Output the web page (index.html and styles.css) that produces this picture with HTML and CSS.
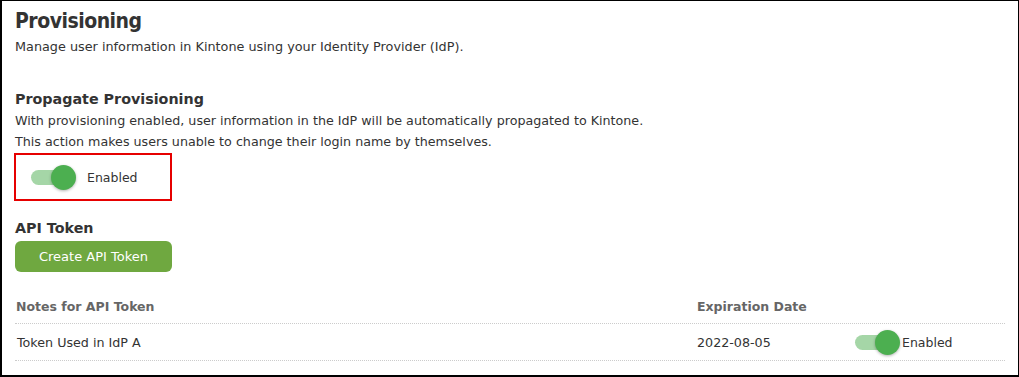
FILE: index.html
```html
<!DOCTYPE html>
<html>
<head>
<meta charset="utf-8">
<link rel="stylesheet" href="styles.css">
</head>
<body>
<div class="frame">
  <h1 class="title">Provisioning</h1>
  <p class="desc">Manage user information in Kintone using your Identity Provider (IdP).</p>

  <h2 class="section-title propagate">Propagate Provisioning</h2>
  <p class="text">With provisioning enabled, user information in the IdP will be automatically propagated to Kintone.<br>This action makes users unable to change their login name by themselves.</p>
  <div class="highlight">
    <span class="switch"><span class="track"></span><span class="knob"></span></span>
    <span class="switch-label">Enabled</span>
  </div>

  <h2 class="section-title api">API Token</h2>
  <button class="btn">Create API Token</button>

  <div class="table">
    <div class="row head">
      <div class="c-notes">Notes for API Token</div>
      <div class="c-date">Expiration Date</div>
      <div class="c-status"></div>
    </div>
    <div class="row body">
      <div class="c-notes cell-notes">Token Used in IdP A</div>
      <div class="c-date">2022-08-05</div>
      <div class="c-status">
        <span class="switch small"><span class="track"></span><span class="knob"></span></span>
        <span class="switch-label tight">Enabled</span>
      </div>
    </div>
  </div>
</div>
</body>
</html>
```
FILE: styles.css
```css
* { box-sizing: border-box; }
html, body { margin: 0; padding: 0; background: #fff; }
body {
  font-family: "DejaVu Sans", "Liberation Sans", sans-serif;
  color: #333;
}
.frame {
  width: 1019px;
  height: 377px;
  border-top: 1px solid #000;
  border-left: 2px solid #000;
  border-right: 1px solid #000;
  border-bottom: 2px solid #000;
  padding: 0 13px 0 13px;
  overflow: hidden;
}
.title {
  margin: 5px 0 0 0;
  font-family: "DejaVu Sans Condensed", "DejaVu Sans", sans-serif;
  font-size: 21px;
  letter-spacing: -0.5px;
  line-height: 30px;
  font-weight: 700;
  color: #333;
}
.desc {
  margin: 1px 0 0 0;
  font-size: 12.8px;
  line-height: 20px;
}
.section-title {
  margin: 0;
  font-size: 14.3px;
  line-height: 22px;
  font-weight: 700;
  color: #333;
}
.propagate { margin-top: 31px; }
.text {
  margin: 0;
  font-size: 12.7px;
  line-height: 21px;
}
.highlight {
  margin-top: 1px;
  width: 158px;
  height: 48px;
  border: 2px solid #e60000;
  margin-left: -1px;
  display: flex;
  align-items: center;
  padding-left: 15px;
}
.switch {
  position: relative;
  display: inline-block;
  width: 45px;
  height: 25px;
  flex: none;
}
.switch .track {
  position: absolute;
  left: 0;
  top: 5px;
  width: 36px;
  height: 15px;
  border-radius: 8px;
  background: #a5d6a7;
}
.switch .knob {
  position: absolute;
  left: 20px;
  top: 0;
  width: 25px;
  height: 25px;
  border-radius: 50%;
  background: #4caf50;
  box-shadow: 0 1px 3px rgba(0,0,0,0.3);
}
.switch-label {
  margin-left: 11px;
  font-size: 12.5px;
  color: #333;
}
.switch-label.tight { margin-left: 2px; }
.api { margin-top: 16px; }
.btn {
  margin-top: 2px;
  width: 157px;
  height: 31px;
  border: none;
  border-radius: 6px;
  background: #6fa840;
  color: #fff;
  font-family: inherit;
  font-size: 13px;
  padding: 0;
  display: block;
}
.table { margin-top: 17px; width: 990px; }
.row { display: flex; align-items: center; }
.row.head {
  height: 35px;
  font-size: 12.5px;
  font-weight: 700;
  color: #666;
  border-bottom: 1px dotted #ccc;
}
.row.body {
  height: 37px;
  font-size: 12.7px;
  border-bottom: 1px dotted #ccc;
}
.c-notes { width: 682px; padding-left: 1px; }
.cell-notes { padding-left: 2px; }
.c-date { width: 158px; }
.c-status { display: flex; align-items: center; }
```
